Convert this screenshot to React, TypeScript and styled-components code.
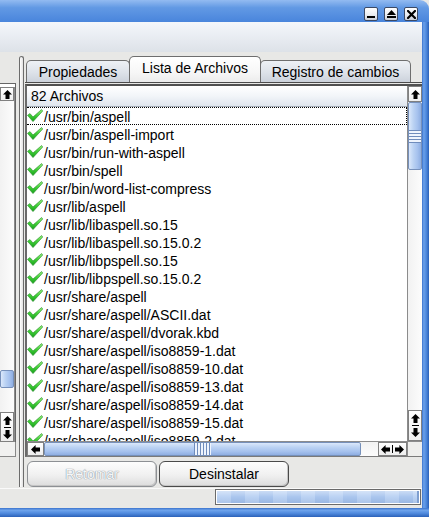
import React from 'react';
import styled, { createGlobalStyle } from 'styled-components';

const GlobalStyle = createGlobalStyle`
  html, body { margin: 0; padding: 0; background: #e8e8e6; }
  body { font-family: "Liberation Sans", Arial, sans-serif; font-size: 14px; color: #000; }
  * { box-sizing: border-box; }
`;

const Window = styled.div`
  width: 429px;
  height: 517px;
  display: flex;
  flex-direction: column;
  overflow: hidden;
`;

const TitleBar = styled.div`
  height: 22px;
  flex: none;
  background: linear-gradient(180deg, #93bbf1 0%, #6299e4 35%, #4985dc 100%);
  border-top-right-radius: 9px;
  display: flex;
  justify-content: flex-end;
  align-items: flex-start;
  padding: 7px 11px 0 0;
  gap: 6px;
`;

const TitleButton = styled.div`
  width: 14px;
  height: 14px;
  border: 1px solid #3c4a66;
  border-radius: 2px;
  background: linear-gradient(180deg, #ffffff 0%, #e8ebf0 60%, #c9ced8 100%);
  display: flex;
  align-items: center;
  justify-content: center;
`;

const FrameBody = styled.div`
  flex: 1;
  display: flex;
  min-height: 0;
`;

const Client = styled.div`
  width: 422px;
  display: flex;
  flex-direction: column;
  background: #e8e8e6;
`;

const RightFrame = styled.div`
  width: 7px;
  background: linear-gradient(90deg, #3a72cc 0%, #6aa0ea 25%, #4e89dd 60%, #2b61b8 100%);
`;

const BottomFrame = styled.div`
  height: 9px;
  flex: none;
  background: linear-gradient(180deg, #3a72cc 0%, #6ea4ec 25%, #4e89dd 60%, #2b61b8 100%);
`;

const Toolbar = styled.div`
  height: 30px;
  flex: none;
  background: linear-gradient(180deg, #f4f7fb 0%, #e4e8ee 70%, #dde2e8 100%);
`;

const Main = styled.div`
  height: 436px;
  flex: none;
  display: flex;
`;

const LeftPanel = styled.div`
  width: 17px;
  flex: none;
  display: flex;
  flex-direction: column;
  padding-top: 31px;
`;

const LeftList = styled.div`
  height: 359px;
  border-top: 1px solid #666;
  border-right: 1px solid #666;
  background: #fff;
  display: flex;
  flex-direction: column;
  padding-top: 3px;
  width: 16px;
`;

const LeftCorner = styled.div`
  height: 15px;
  width: 16px;
  background: #f1f1f0;
  border-right: 1px solid #888;
  border-bottom: 1px solid #888;
`;

const Splitter = styled.div`
  width: 5px;
  margin: 4px 1px 1px 2px;
  border: 1px solid #6c6c6c;
  border-bottom: none;
  border-radius: 3px 3px 0 0;
  background: linear-gradient(90deg, #ffffff, #e2e2e2);
  flex: none;
`;

const RightPanel = styled.div`
  flex: 1;
  display: flex;
  flex-direction: column;
  min-width: 0;
`;

const TabRow = styled.div`
  height: 30px;
  display: flex;
  align-items: flex-end;
  padding-left: 1px;
  flex: none;
`;

const Tab = styled.div<{ $selected?: boolean; $w: number }>`
  width: ${p => p.$w}px;
  height: ${p => (p.$selected ? 26 : 22)}px;
  margin-left: -1px;
  &:first-child { margin-left: 0; }
  border: 1px solid #6e6e6e;
  border-bottom: none;
  border-radius: 5px 5px 0 0;
  background: ${p =>
    p.$selected
      ? 'linear-gradient(180deg, #ffffff 0%, #f7f7f7 60%, #ececec 100%)'
      : 'linear-gradient(180deg, #eef1f5 0%, #dde2e9 55%, #ccd2db 100%)'};
  display: flex;
  align-items: center;
  justify-content: center;
  padding-bottom: ${p => (p.$selected ? 4 : 0)}px;
  font-size: 14px;
  white-space: nowrap;
  position: relative;
  z-index: ${p => (p.$selected ? 2 : 1)};
`;

const TabPanel = styled.div`
  border-top: 1px solid #4c4c4c;
  padding-top: 1px;
  display: flex;
  flex-direction: column;
  flex: 1;
`;

const ListBox = styled.div`
  height: 373px;
  border-top: 2px solid #505050;
  border-left: 2px solid #6a6a6a;
  border-bottom: 1px solid #7a7a7a;
  background: #fff;
  display: flex;
  flex-direction: column;
`;

const ListTop = styled.div`
  height: 355px;
  display: flex;
`;

const ListMain = styled.div`
  flex: 1;
  display: flex;
  flex-direction: column;
  min-width: 0;
`;

const Header = styled.div`
  height: 21px;
  flex: none;
  border-bottom: 1px solid #a3abb6;
  background: linear-gradient(180deg, #ffffff 0%, #f2f5f9 50%, #dfe5ed 100%);
  display: flex;
  align-items: center;
  padding-left: 4px;
  font-size: 14px;
`;

const Rows = styled.div`
  flex: 1;
  overflow: hidden;
`;

const Row = styled.div<{ $focused?: boolean }>`
  height: 18px;
  display: flex;
  align-items: center;
  border: 1px dotted ${p => (p.$focused ? '#000' : 'transparent')};
  border-left: none;
  white-space: nowrap;
  font-size: 14px;
  line-height: 16px;
  padding-top: 1px;
`;

const CheckSvg = styled.svg`
  flex: none;
  margin-right: 1px;
  margin-top: -2px;
`;

const VScroll = styled.div`
  width: 15px;
  flex: none;
  border-left: 1px solid #8c8c8c;
  display: flex;
  flex-direction: column;
  background: linear-gradient(90deg, #f2f2f2, #fcfcfc);
`;

const LeftVScroll = styled(VScroll)`
  width: 15px;
  border-left: none;
  border-right: 1px solid #8c8c8c;
  flex: 1;
`;

const ScrollBtn = styled.div<{ $h: number }>`
  height: ${p => p.$h}px;
  flex: none;
  border: 1px solid #808080;
  background: linear-gradient(180deg, #ffffff 0%, #eeeeee 100%);
  display: flex;
  flex-direction: column;
  align-items: center;
  justify-content: center;
  gap: 2px;
`;

const HScrollBtn = styled.div<{ $w: number }>`
  width: ${p => p.$w}px;
  flex: none;
  border: 1px solid #808080;
  background: linear-gradient(180deg, #ffffff 0%, #eeeeee 100%);
  display: flex;
  align-items: center;
  justify-content: center;
  gap: 2px;
`;

const Track = styled.div`
  flex: 1;
  display: flex;
  flex-direction: column;
`;

const HTrack = styled.div`
  flex: 1;
  display: flex;
`;

const VThumb = styled.div<{ $top: number; $h: number }>`
  margin-top: ${p => p.$top}px;
  height: ${p => p.$h}px;
  border: 1px solid #7690ba;
  border-radius: 2px;
  background: linear-gradient(90deg, #dbe8fb 0%, #bcd3f3 35%, #a6c2ee 70%, #8eaee2 100%);
  display: flex;
  align-items: center;
  justify-content: center;
`;

const HThumb = styled.div<{ $w: number }>`
  width: ${p => p.$w}px;
  border: 1px solid #7690ba;
  border-radius: 2px;
  background: linear-gradient(180deg, #dbe8fb 0%, #bcd3f3 35%, #a6c2ee 70%, #8eaee2 100%);
  display: flex;
  align-items: center;
  justify-content: center;
`;

const VGrip = styled.div`
  width: 100%;
  height: 13px;
  background: repeating-linear-gradient(180deg, #6f8cbc 0 1px, #eef4fd 1px 3px);
`;

const HGrip = styled.div`
  height: 100%;
  width: 17px;
  background: repeating-linear-gradient(90deg, #6f8cbc 0 1px, #eef4fd 1px 3px);
`;

const Sep = styled.div<{ $vertical?: boolean }>`
  width: ${p => (p.$vertical ? 1 : 7)}px;
  height: ${p => (p.$vertical ? 8 : 1)}px;
  background: #000;
`;

const HScrollRow = styled.div`
  height: 15px;
  display: flex;
  flex: none;
`;

const HScroll = styled.div`
  flex: 1;
  display: flex;
  border-top: 1px solid #8c8c8c;
  background: linear-gradient(180deg, #f2f2f2, #fcfcfc);
`;

const Corner = styled.div`
  width: 15px;
  flex: none;
  background: #eeeeec;
  border-top: 1px solid #8c8c8c;
  border-left: 1px solid #8c8c8c;
`;

const ButtonRow = styled.div`
  display: flex;
  gap: 2px;
  padding-left: 2px;
  margin-top: 4px;
`;

const Button = styled.div<{ $disabled?: boolean }>`
  width: 130px;
  height: 26px;
  border: 1px solid ${p => (p.$disabled ? '#8d9094' : '#4a4a4a')};
  border-radius: 6px;
  background: linear-gradient(180deg, #fdfdfd 0%, #f0f0f0 55%, #dcdcdc 100%);
  box-shadow: inset -1px -1px 0 #c4c4c4;
  display: flex;
  align-items: center;
  justify-content: center;
  font-size: 14px;
  color: ${p => (p.$disabled ? '#f4f6f8' : '#000')};
  text-shadow: ${p => (p.$disabled ? '0 0 1px #8a939c, 0 0 1px #8a939c' : 'none')};
`;

const StatusBar = styled.div`
  height: 20px;
  flex: none;
  border-top: 1px solid #fafafa;
  padding: 0 1px 0 215px;
  display: flex;
  align-items: flex-start;
`;

const Progress = styled.div`
  width: 206px;
  height: 16px;
  border: 1px solid #6a6a6a;
  background: #fff;
  padding: 1px;
`;

const ProgressFill = styled.div`
  width: 100%;
  height: 100%;
  border-right: 2px solid #7f9fd0;
  background:
    linear-gradient(180deg, rgba(255,255,255,0.45) 0%, rgba(255,255,255,0.1) 50%, rgba(0,0,0,0.04) 100%),
    repeating-linear-gradient(90deg, #b3cdf2 0 14px, #a0bfec 14px 28px);
`;

const ArrowSvg = styled.svg<{ $rot: number }>`
  transform: rotate(${p => p.$rot}deg);
  flex: none;
`;

type Dir = 'up' | 'down' | 'left' | 'right';
const rotations: Record<Dir, number> = { up: 0, right: 90, down: 180, left: 270 };

const Arrow = ({ dir }: { dir: Dir }) => (
  <ArrowSvg $rot={rotations[dir]} width="9" height="9" viewBox="0 0 9 9">
    <polygon points="4.5,0 9,4.6 6.5,4.6 6.5,9 2.5,9 2.5,4.6 0,4.6" fill="#000" />
  </ArrowSvg>
);

const Check = () => (
  <CheckSvg width="16" height="13" viewBox="0 0 16 13">
    <defs>
      <linearGradient id="chk" x1="0" y1="0" x2="0" y2="1">
        <stop offset="0" stopColor="#9cf27e" />
        <stop offset="0.5" stopColor="#3fcf36" />
        <stop offset="1" stopColor="#159c19" />
      </linearGradient>
    </defs>
    <polygon
      points="0.5,6.3 3,4.6 6,8 14.6,0.5 15.7,2 6,12.6"
      fill="url(#chk)"
      stroke="#1f8a22"
      strokeWidth="0.6"
      strokeLinejoin="round"
    />
  </CheckSvg>
);

const MinGlyph = () => (
  <svg width="8" height="8" viewBox="0 0 8 8">
    <rect x="0" y="6" width="8" height="2" fill="#000" />
  </svg>
);
const MaxGlyph = () => (
  <svg width="9" height="8" viewBox="0 0 9 8">
    <polygon points="4.5,0 9,5 0,5" fill="#000" />
    <rect x="0" y="6" width="9" height="2" fill="#000" />
  </svg>
);
const CloseGlyph = () => (
  <svg width="9" height="9" viewBox="0 0 9 9">
    <path d="M1 1 L8 8 M8 1 L1 8" stroke="#000" strokeWidth="2.2" strokeLinecap="square" />
  </svg>
);

const files = [
  '/usr/bin/aspell',
  '/usr/bin/aspell-import',
  '/usr/bin/run-with-aspell',
  '/usr/bin/spell',
  '/usr/bin/word-list-compress',
  '/usr/lib/aspell',
  '/usr/lib/libaspell.so.15',
  '/usr/lib/libaspell.so.15.0.2',
  '/usr/lib/libpspell.so.15',
  '/usr/lib/libpspell.so.15.0.2',
  '/usr/share/aspell',
  '/usr/share/aspell/ASCII.dat',
  '/usr/share/aspell/dvorak.kbd',
  '/usr/share/aspell/iso8859-1.dat',
  '/usr/share/aspell/iso8859-10.dat',
  '/usr/share/aspell/iso8859-13.dat',
  '/usr/share/aspell/iso8859-14.dat',
  '/usr/share/aspell/iso8859-15.dat',
  '/usr/share/aspell/iso8859-2.dat',
];

export default function App() {
  return (
    <>
      <GlobalStyle />
      <Window>
        <TitleBar>
          <TitleButton><MinGlyph /></TitleButton>
          <TitleButton><MaxGlyph /></TitleButton>
          <TitleButton><CloseGlyph /></TitleButton>
        </TitleBar>
        <FrameBody>
          <Client>
            <Toolbar />
            <Main>
              <LeftPanel>
                <LeftList>
                  <LeftVScroll>
                    <ScrollBtn $h={14}><Arrow dir="up" /></ScrollBtn>
                    <Track>
                      <VThumb $top={269} $h={18} />
                    </Track>
                    <ScrollBtn $h={30}>
                      <Arrow dir="up" />
                      <Sep />
                      <Arrow dir="down" />
                    </ScrollBtn>
                  </LeftVScroll>
                </LeftList>
                <LeftCorner />
              </LeftPanel>
              <Splitter />
              <RightPanel>
                <TabRow>
                  <Tab $w={104}>Propiedades</Tab>
                  <Tab $w={132} $selected>Lista de Archivos</Tab>
                  <Tab $w={151}>Registro de cambios</Tab>
                </TabRow>
                <TabPanel>
                  <ListBox>
                    <ListTop>
                      <ListMain>
                        <Header>82 Archivos</Header>
                        <Rows>
                          {files.map((f, i) => (
                            <Row key={f} $focused={i === 0}>
                              <Check />
                              {f}
                            </Row>
                          ))}
                        </Rows>
                      </ListMain>
                      <VScroll>
                        <ScrollBtn $h={16}><Arrow dir="up" /></ScrollBtn>
                        <Track>
                          <VThumb $top={0} $h={68}><VGrip /></VThumb>
                        </Track>
                        <ScrollBtn $h={31}>
                          <Arrow dir="up" />
                          <Sep />
                          <Arrow dir="down" />
                        </ScrollBtn>
                      </VScroll>
                    </ListTop>
                    <HScrollRow>
                      <HScroll>
                        <HScrollBtn $w={17}><Arrow dir="left" /></HScrollBtn>
                        <HTrack>
                          <HThumb $w={317}><HGrip /></HThumb>
                        </HTrack>
                        <HScrollBtn $w={29}>
                          <Arrow dir="left" />
                          <Sep $vertical />
                          <Arrow dir="right" />
                        </HScrollBtn>
                      </HScroll>
                      <Corner />
                    </HScrollRow>
                  </ListBox>
                  <ButtonRow>
                    <Button $disabled>Retomar</Button>
                    <Button>Desinstalar</Button>
                  </ButtonRow>
                </TabPanel>
              </RightPanel>
            </Main>
            <StatusBar>
              <Progress>
                <ProgressFill />
              </Progress>
            </StatusBar>
          </Client>
          <RightFrame />
        </FrameBody>
        <BottomFrame />
      </Window>
    </>
  );
}
